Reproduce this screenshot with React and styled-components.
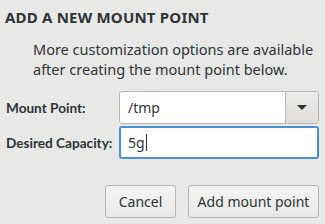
import React from 'react';
import styled, { createGlobalStyle } from 'styled-components';

const GlobalStyle = createGlobalStyle`
  html, body {
    margin: 0;
    padding: 0;
    background: #e8e8e7;
  }
  body {
    font-family: "Noto Sans", "Open Sans", sans-serif;
    color: #2e3436;
  }
`;

const Dialog = styled.div`
  width: 325px;
  height: 224px;
  box-sizing: border-box;
  padding: 8px 6px 6px 5px;
  display: flex;
  flex-direction: column;
`;

const Title = styled.h1`
  margin: 0;
  font-size: 15px;
  font-weight: 700;
  line-height: 18px;
  letter-spacing: 0.2px;
`;

const Note = styled.p`
  margin: 13px 0 0 28px;
  font-size: 14.5px;
  line-height: 20px;
`;

const Form = styled.div`
  display: grid;
  grid-template-columns: 114px 200px;
  row-gap: 2px;
  align-items: center;
  margin-top: 12px;
`;

const Label = styled.label`
  font-family: Lato, "Noto Sans", sans-serif;
  font-size: 13.6px;
  font-weight: 700;
  padding-left: 1px;
  white-space: nowrap;
`;

const Combo = styled.div`
  display: flex;
  height: 33px;
  box-sizing: border-box;
  border: 1px solid #b6b6b3;
  border-radius: 3px;
  background: #fff;
  overflow: hidden;
`;

const ComboText = styled.div`
  flex: 1;
  display: flex;
  align-items: center;
  padding-left: 8px;
  font-size: 14px;
`;

const ComboButton = styled.div`
  width: 32px;
  display: flex;
  align-items: center;
  justify-content: center;
  border-left: 1px solid #b6b6b3;
  background: linear-gradient(#edebe9, #e0ddda);
`;

const Arrow = styled.span`
  width: 0;
  height: 0;
  border-left: 5px solid transparent;
  border-right: 5px solid transparent;
  border-top: 5px solid #2e3436;
`;

const Entry = styled.div`
  height: 33px;
  box-sizing: border-box;
  border: 2px solid ${p => (p.focused ? '#4a90d9' : '#b6b6b3')};
  border-radius: 3px;
  background: #fff;
  display: flex;
  align-items: center;
  padding-left: 7px;
  font-size: 14px;
`;

const Caret = styled.span`
  display: inline-block;
  width: 1px;
  height: 17px;
  background: #2e3436;
  margin-left: 1px;
`;

const Actions = styled.div`
  margin-top: auto;
  display: flex;
  justify-content: flex-end;
  gap: 12px;
`;

const Button = styled.button`
  height: 33px;
  width: ${p => p.w}px;
  box-sizing: border-box;
  border: 1px solid #b6b6b3;
  border-radius: 3px;
  background: linear-gradient(#f4f4f2, #e8e8e6);
  font-family: inherit;
  font-size: 14px;
  color: #2e3436;
  padding: 0;
`;

export default function App() {
  return (
    <>
      <GlobalStyle />
      <Dialog>
        <Title>ADD A NEW MOUNT POINT</Title>
        <Note>
          More customization options are available
          <br />
          after creating the mount point below.
        </Note>
        <Form>
          <Label>Mount Point:</Label>
          <Combo>
            <ComboText>/tmp</ComboText>
            <ComboButton>
              <Arrow />
            </ComboButton>
          </Combo>
          <Label>Desired Capacity:</Label>
          <Entry focused>
            5g<Caret />
          </Entry>
        </Form>
        <Actions>
          <Button w={71}>Cancel</Button>
          <Button w={131}>Add mount point</Button>
        </Actions>
      </Dialog>
    </>
  );
}
